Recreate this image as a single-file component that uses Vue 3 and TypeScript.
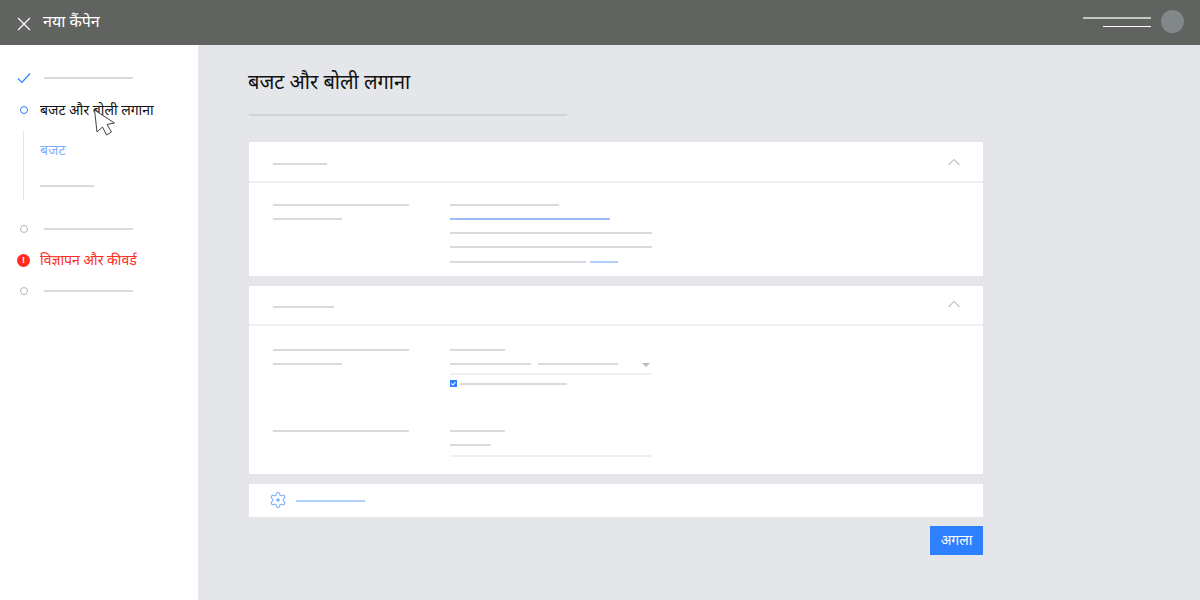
<script setup lang="ts">
const title: string = 'बजट और बोली लगाना'
</script>

<template>
  <div class="page">
    <header class="top">
      <svg class="close" width="16" height="16" viewBox="0 0 16 16"><path d="M2 2 L14 14 M14 2 L2 14" stroke="#fff" stroke-width="1.2" fill="none" /></svg>
      <span class="top-title">नया कैंपेन</span>
      <div class="account">
        <div class="acc-lines"><i class="a1"></i><i class="a2"></i></div>
        <div class="avatar"></div>
      </div>
    </header>
    <div class="body">
      <aside class="side">
        <div class="step s-check">
          <span class="ic"><svg width="14" height="12" viewBox="0 0 14 12"><path d="M1 6.5 L5 10.5 L13 1.5" stroke="#2f80ff" stroke-width="1.2" fill="none" /></svg></span>
          <i class="ln w89 side-ln"></i>
        </div>
        <div class="step s-cur">
          <span class="ic"><span class="dot blue"></span></span>
          <span class="cur-text">{{ title }}</span>
        </div>
        <div class="sub">
          <span class="sub-a">बजट</span>
          <i class="ln w54 sub-ln"></i>
        </div>
        <div class="step s-3">
          <span class="ic"><span class="dot"></span></span>
          <i class="ln w89 side-ln"></i>
        </div>
        <div class="step s-err">
          <span class="ic"><span class="err">!</span></span>
          <span class="err-text">विज्ञापन और कीवर्ड</span>
        </div>
        <div class="step s-5">
          <span class="ic"><span class="dot"></span></span>
          <i class="ln w89 side-ln"></i>
        </div>
        <svg class="cursor" width="24" height="30" viewBox="0 0 24 30"><path d="M1.5 2 L21.5 15 L14 16.5 L18.5 24 L13.5 27 L9.5 19 L4 24 Z" fill="#fff" stroke="#444" stroke-width="1" stroke-linejoin="miter" /></svg>
      </aside>
      <main class="main">
        <h1 class="h">{{ title }}</h1>
        <i class="ln h-ln"></i>

        <section class="card c1">
          <div class="card-head">
            <i class="ln w54"></i>
            <svg class="chev" width="14" height="8" viewBox="0 0 14 8"><path d="M1.5 7 L7 1.5 L12.5 7" stroke="#c4c5ca" stroke-width="1.2" fill="none" /></svg>
          </div>
          <div class="card-body b1">
            <div class="left"><i class="ln w136"></i><i class="ln w69 g12"></i></div>
            <div class="right">
              <i class="ln w109"></i>
              <i class="ln w160 g12 blue-ln"></i>
              <i class="ln w202 g12"></i>
              <i class="ln w202 g12"></i>
              <div class="pair g13"><i class="ln w136"></i><i class="ln w28 light-ln"></i></div>
            </div>
          </div>
        </section>

        <section class="card c2">
          <div class="card-head h2">
            <i class="ln w61"></i>
            <svg class="chev" width="14" height="8" viewBox="0 0 14 8"><path d="M1.5 7 L7 1.5 L12.5 7" stroke="#c4c5ca" stroke-width="1.2" fill="none" /></svg>
          </div>
          <div class="card-body b2">
            <div class="left"><i class="ln w136"></i><i class="ln w69 g12"></i></div>
            <div class="right">
              <i class="ln w55"></i>
              <div class="select g12">
                <i class="ln w81"></i><i class="ln w80 sel2"></i><span class="tri"></span>
              </div>
              <i class="rule r1"></i>
              <div class="cb-row">
                <span class="cb"><svg width="7" height="7" viewBox="0 0 7 7"><path d="M1.5 3.5 L3 5 L5.5 2" stroke="#fff" stroke-width="1.1" fill="none" /></svg></span>
                <i class="ln w107"></i>
              </div>
            </div>
          </div>
          <div class="card-body b3">
            <div class="left"><i class="ln w136"></i></div>
            <div class="right">
              <i class="ln w55"></i>
              <i class="ln w41 g12"></i>
              <i class="rule r2"></i>
            </div>
          </div>
        </section>

        <section class="card c3">
          <svg class="gear" width="18" height="18" viewBox="0 0 24 24" fill="none" stroke="#7fb0ff" stroke-width="1.5"><path d="M12.22 2h-.44a2 2 0 0 0-2 2v.18a2 2 0 0 1-1 1.73l-.43.25a2 2 0 0 1-2 0l-.15-.08a2 2 0 0 0-2.73.73l-.22.38a2 2 0 0 0 .73 2.73l.15.1a2 2 0 0 1 1 1.72v.51a2 2 0 0 1-1 1.74l-.15.09a2 2 0 0 0-.73 2.73l.22.38a2 2 0 0 0 2.73.73l.15-.08a2 2 0 0 1 2 0l.43.25a2 2 0 0 1 1 1.73V20a2 2 0 0 0 2 2h.44a2 2 0 0 0 2-2v-.18a2 2 0 0 1 1-1.73l.43-.25a2 2 0 0 1 2 0l.15.08a2 2 0 0 0 2.73-.73l.22-.39a2 2 0 0 0-.73-2.73l-.15-.08a2 2 0 0 1-1-1.74v-.5a2 2 0 0 1 1-1.74l.15-.09a2 2 0 0 0 .73-2.73l-.22-.38a2 2 0 0 0-2.73-.73l-.15.08a2 2 0 0 1-2 0l-.43-.25a2 2 0 0 1-1-1.73V4a2 2 0 0 0-2-2z" /><circle cx="12" cy="12" r="2.4" fill="#7fb0ff" stroke="none" /></svg>
          <i class="ln w69 light-ln"></i>
        </section>

        <div class="foot"><button class="next">अगला</button></div>
      </main>
    </div>
  </div>
</template>

<style>
html, body { margin: 0; }
</style>

<style scoped>
.page { width: 1200px; height: 600px; overflow: hidden; display: flex; flex-direction: column; font-family: "Noto Sans Devanagari", "Noto Sans", sans-serif; font-weight: 400; }
i { display: block; }
.ln { height: 2px; background: #d9d9de; flex: none; }
.w28 { width: 28px; } .w41 { width: 41px; } .w54 { width: 54px; } .w55 { width: 55px; } .w61 { width: 61px; }
.w69 { width: 69px; } .w80 { width: 80px; } .w81 { width: 81px; } .w89 { width: 89px; } .w107 { width: 107px; }
.w109 { width: 109px; } .w136 { width: 136px; } .w160 { width: 160px; } .w202 { width: 202px; }
.g12 { margin-top: 12px; } .g13 { margin-top: 13px; }
.blue-ln { background: #9cbcf5; } .light-ln { background: #b0d0ff; }

.top { height: 45px; flex: none; background: #616361; display: flex; align-items: center; padding: 0 16px; box-sizing: border-box; color: #fff; }
.close { margin-top: 2px; }
.top-title { margin-left: 11px; font-size: 16px; line-height: 24px; margin-top: 2px; }
.account { margin-left: auto; display: flex; align-items: center; gap: 10px; }
.acc-lines { display: flex; flex-direction: column; align-items: flex-end; margin-bottom: 1px; }
.a1 { width: 68px; height: 2px; background: #c6c8c5; }
.a2 { width: 48px; height: 1px; background: #fff; margin-top: 7px; }
.avatar { width: 23px; height: 23px; border-radius: 50%; background: #82878a; margin-bottom: 2px; }

.body { flex: 1; display: flex; min-height: 0; }
.side { width: 198px; flex: none; background: #fff; position: relative; padding-top: 64px; box-sizing: border-box; }
.step { display: flex; align-items: center; height: 28px; }
.ic { flex: none; display: flex; justify-content: center; align-items: center; box-sizing: border-box; width: 40px; padding-left: 7px; }
.side-ln { margin-left: 4px; }
.s-check { margin-top: -45px; }
.s-cur { margin-top: 4px; }
.dot { width: 6px; height: 6px; border: 1.5px solid #b4b5ba; border-radius: 50%; display: block; }
.dot.blue { border-color: #2f80ff; }
.cur-text { font-size: 14px; line-height: 20px; color: #111; margin-top: 3px; }
.sub { margin: 7px 0 0 23px; height: 69px; border-left: 1px solid #e3e3e6; padding-left: 16px; display: flex; flex-direction: column; }
.sub-a { font-size: 14px; color: #7fb0ff; line-height: 20px; margin-top: 11px; }
.sub-ln { margin-top: 23px; }
.s-3 { margin-top: 15px; }
.s-err { margin-top: 3px; }
.err { width: 13px; height: 13px; border-radius: 50%; background: #ff2d20; color: #fff; font: bold 9px/13px "Liberation Sans", sans-serif; text-align: center; display: block; }
.err-text { font-size: 14px; line-height: 20px; color: #ff2d20; margin-top: 3px; }
.s-5 { margin-top: 3px; }
.cursor { position: absolute; left: 93px; top: 63px; }

.main { flex: 1; background: #e5e6ea; padding: 0 0 0 51px; box-sizing: border-box; }
.h { margin: 24px 0 0 -1px; font-size: 20px; font-weight: 400; line-height: 30px; color: #111; }
.h-ln { width: 318px; height: 2px; background: #d2d3d6; margin-top: 15px; }
.card { width: 734px; background: #fff; }
.c1 { margin-top: 26px; height: 134px; }
.c2 { margin-top: 10px; height: 188px; }
.c3 { margin-top: 10px; height: 33px; display: flex; align-items: center; padding-left: 20px; box-sizing: border-box; }
.card-head { border-bottom: 2px solid #f0f0f2; display: flex; align-items: center; padding: 4px 22px 0 24px; box-sizing: border-box; justify-content: space-between; height: 41px; }
.h2 { height: 40px; padding-top: 4px; }
.chev { margin-top: -4px; }
.h2 .chev { margin-top: -6px; }
.card-body { display: flex; padding-left: 24px; }
.left { width: 177px; flex: none; }
.b1 { padding-top: 21px; }
.b2 { padding-top: 23px; }
.b3 { padding-top: 0; margin-top: 43px; }
.right { width: 202px; }
.pair { display: flex; gap: 4px; }
.select { display: flex; align-items: center; position: relative; }
.sel2 { margin-left: 7px; }
.tri { position: absolute; right: 2px; top: 0; width: 0; height: 0; border-left: 4px solid transparent; border-right: 4px solid transparent; border-top: 4px solid #b9babf; }
.rule { height: 2px; background: #f0f0f2; }
.r1 { margin-top: 8px; }
.r2 { margin-top: 9px; }
.cb-row { display: flex; align-items: center; gap: 3px; margin-top: 5px; }
.cb { width: 7px; height: 7px; background: #2f80ff; display: block; flex: none; line-height: 0; }
.gear { margin: -2px 9px 0 0; }
.foot { width: 734px; display: flex; justify-content: flex-end; margin-top: 9px; }
.next { width: 53px; height: 29px; border: 0; padding: 2px 0 0; background: #2f80ff; color: #fff; font: 400 14px "Noto Sans Devanagari", "Noto Sans", sans-serif; }
</style>
